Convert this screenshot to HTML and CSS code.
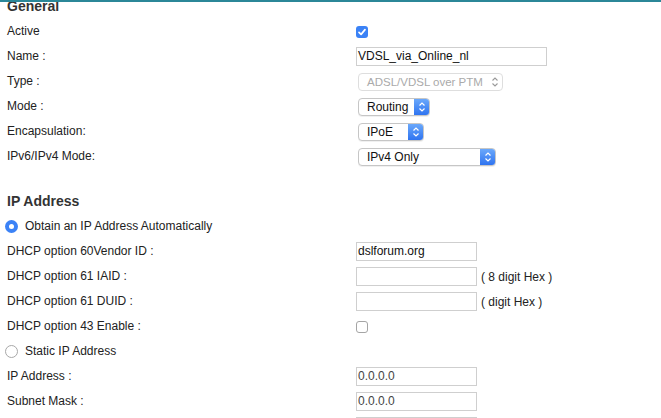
FILE: index.html
```html
<!DOCTYPE html>
<html>
<head>
<meta charset="utf-8">
<link rel="stylesheet" href="styles.css">
</head>
<body>
<div class="frame">
  <div class="content">
    <section class="group">
      <h2 class="head">General</h2>
      <div class="row"><span class="lbl">Active</span><div class="ctl"><span class="cb on"><svg viewBox="0 0 12 12" width="12" height="12"><path d="M3 6.3 L5.1 8.4 L9 3.6" fill="none" stroke="#fff" stroke-width="1.7" stroke-linecap="round" stroke-linejoin="round"/></svg></span></div></div>
      <div class="row"><span class="lbl">Name :</span><div class="ctl"><span class="inp wide">VDSL_via_Online_nl</span></div></div>
      <div class="row"><span class="lbl">Type :</span><div class="ctl"><span class="sel dis w-type"><span class="val">ADSL/VDSL over PTM</span><span class="arr"><svg viewBox="0 0 8 12" width="8" height="12"><path d="M1.5 4.5 L4 2 L6.5 4.5 M1.5 7.5 L4 10 L6.5 7.5" fill="none" stroke="#9a9a9a" stroke-width="1.1"/></svg></span></span></div></div>
      <div class="row"><span class="lbl">Mode :</span><div class="ctl"><span class="sel w-mode"><span class="val">Routing</span><span class="arr"><svg viewBox="0 0 8 12" width="8" height="12"><path d="M1.5 4.5 L4 2 L6.5 4.5 M1.5 7.5 L4 10 L6.5 7.5" fill="none" stroke="#fff" stroke-width="1.2"/></svg></span></span></div></div>
      <div class="row"><span class="lbl">Encapsulation:</span><div class="ctl"><span class="sel w-enc"><span class="val">IPoE</span><span class="arr"><svg viewBox="0 0 8 12" width="8" height="12"><path d="M1.5 4.5 L4 2 L6.5 4.5 M1.5 7.5 L4 10 L6.5 7.5" fill="none" stroke="#fff" stroke-width="1.2"/></svg></span></span></div></div>
      <div class="row"><span class="lbl">IPv6/IPv4 Mode:</span><div class="ctl"><span class="sel w-ipv"><span class="val">IPv4 Only</span><span class="arr"><svg viewBox="0 0 8 12" width="8" height="12"><path d="M1.5 4.5 L4 2 L6.5 4.5 M1.5 7.5 L4 10 L6.5 7.5" fill="none" stroke="#fff" stroke-width="1.2"/></svg></span></span></div></div>
    </section>
    <section class="group ip">
      <h2 class="head">IP Address</h2>
      <div class="row"><span class="radio-lbl"><span class="rd on"></span>Obtain an IP Address Automatically</span></div>
      <div class="row"><span class="lbl">DHCP option 60Vendor ID :</span><div class="ctl"><span class="inp">dslforum.org</span></div></div>
      <div class="row"><span class="lbl">DHCP option 61 IAID :</span><div class="ctl"><span class="inp"></span><span class="hint">( 8 digit Hex )</span></div></div>
      <div class="row"><span class="lbl">DHCP option 61 DUID :</span><div class="ctl"><span class="inp"></span><span class="hint">( digit Hex )</span></div></div>
      <div class="row"><span class="lbl">DHCP option 43 Enable :</span><div class="ctl"><span class="cb"></span></div></div>
      <div class="row"><span class="radio-lbl"><span class="rd"></span>Static IP Address</span></div>
      <div class="row"><span class="lbl">IP Address :</span><div class="ctl"><span class="inp gray">0.0.0.0</span></div></div>
      <div class="row"><span class="lbl">Subnet Mask :</span><div class="ctl"><span class="inp gray">0.0.0.0</span></div></div>
      <div class="row"><span class="lbl"></span><div class="ctl"><span class="inp gray"></span></div></div>
    </section>
  </div>
</div>
</body>
</html>
```

FILE: styles.css
```css
html, body {
  margin: 0;
  padding: 0;
  background: #fff;
  overflow: hidden;
}
body {
  font-family: "Liberation Sans", Arial, sans-serif;
  font-size: 12px;
  color: #222;
}
.frame {
  border-top: 2px solid #2b8798;
  height: 416px;
  overflow: hidden;
}
.content {
  margin-top: -8px;
  padding-left: 7px;
}
.head {
  margin: 0;
  height: 25px;
  line-height: 25px;
  font-size: 14px;
  font-weight: bold;
  color: #333;
}
.group.ip {
  margin-top: 20px;
}
.row {
  display: grid;
  grid-template-columns: 349px 1fr;
  align-items: center;
  height: 25px;
}
.lbl {
  line-height: 25px;
}
.ctl {
  display: flex;
  align-items: center;
  gap: 4px;
}
.inp {
  box-sizing: border-box;
  width: 121px;
  height: 19px;
  border: 1px solid #cfcfcf;
  padding: 0 1px;
  line-height: 17px;
  font-size: 12px;
  color: #111;
  background: #fff;
}
.inp.wide {
  width: 191px;
}
.inp.gray {
  color: #444;
}
.hint {
  font-size: 12px;
  color: #222;
}
.cb {
  box-sizing: border-box;
  width: 12px;
  height: 12px;
  border-radius: 3px;
  border: 1px solid #a5a5a5;
  background: #fff;
  display: inline-flex;
  align-items: center;
  justify-content: center;
}
.cb.on {
  border: none;
  background: #3b82f6;
}
.cb svg {
  display: block;
}
.sel {
  box-sizing: border-box;
  margin-left: 2px;
  display: flex;
  align-items: stretch;
  height: 18px;
  border: 1px solid #c6c6c6;
  border-radius: 4px;
  background: #fff;
  box-shadow: 0 1px 0 rgba(0,0,0,0.06);
  overflow: hidden;
  font-size: 12px;
  color: #111;
}
.sel .val {
  flex: 1;
  padding-left: 8px;
  line-height: 16px;
  white-space: nowrap;
}
.sel .arr {
  width: 15px;
  display: flex;
  align-items: center;
  justify-content: center;
  background: linear-gradient(#6aa8fb, #2f74f0);
}
.sel.dis {
  border-color: #dedede;
  color: #aaa;
  box-shadow: none;
  font-size: 11.5px;
}
.sel.dis .arr {
  background: none;
}
.w-type { width: 145px; }
.w-mode { width: 72px; }
.w-enc { width: 66px; }
.w-ipv { width: 138px; }
.radio-lbl {
  display: flex;
  align-items: center;
  margin-left: -2px;
  line-height: 25px;
  white-space: nowrap;
}
.rd {
  box-sizing: border-box;
  width: 13px;
  height: 13px;
  border-radius: 50%;
  border: 1px solid #a8a8a8;
  background: #fff;
  margin-right: 7px;
  display: inline-flex;
  align-items: center;
  justify-content: center;
}
.rd.on {
  border: none;
  background: #3b82f6;
}
.rd.on::after {
  content: "";
  width: 5px;
  height: 5px;
  border-radius: 50%;
  background: #fff;
}
```
